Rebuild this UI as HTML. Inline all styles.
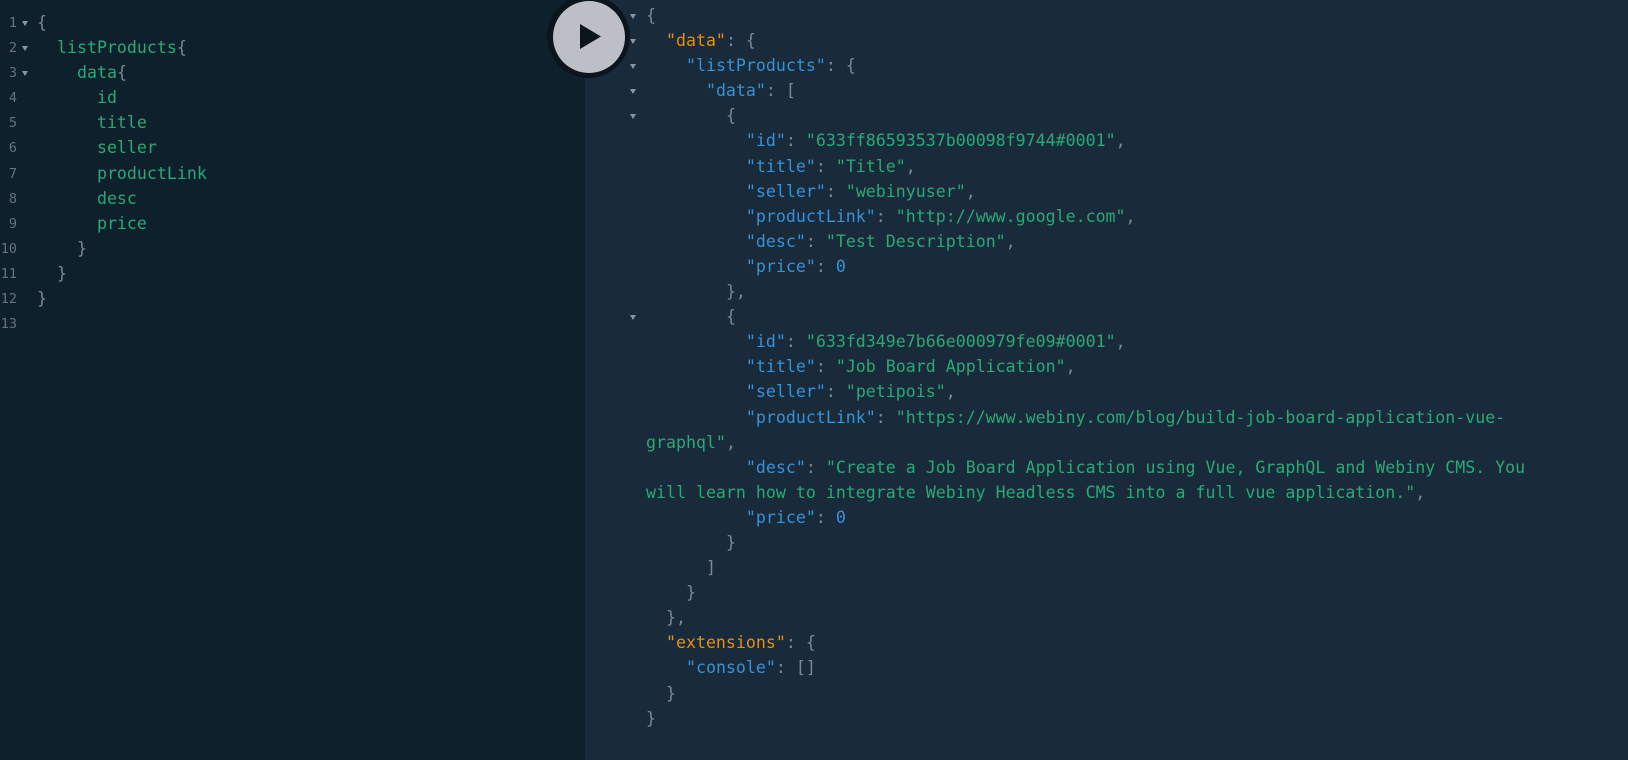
<!DOCTYPE html>
<html><head><meta charset="utf-8"><style>
html,body{margin:0;padding:0;width:1628px;height:760px;overflow:hidden;background:#192b3b;}
.l{position:absolute;left:0;top:0;width:585px;height:760px;background:#0f202d;}
.code{position:absolute;font-family:"DejaVu Sans Mono","Liberation Mono",monospace;font-size:16.6px;line-height:25.1px;white-space:pre;color:#8a949c;}
.g{color:#2aa876}.b{color:#3592d6}.o{color:#e58e10}.p{color:#7d8891}
.num{position:absolute;left:0;width:17px;text-align:right;font-family:"DejaVu Sans Mono",monospace;font-size:13.5px;line-height:25.1px;color:#66727c;}
.arr{position:absolute;width:0;height:0;border-left:3.5px solid transparent;border-right:3.5px solid transparent;border-top:5px solid #8c959c;}
.btn{position:absolute;left:547px;top:-5px;width:83px;height:83px;border-radius:50%;background:#0c151e;}
.btn i{position:absolute;left:5.5px;top:5.5px;width:72px;height:72px;border-radius:50%;background:#bcc0c6;}
</style></head><body>
<div class="l"></div>
<div class="num" style="top:11px">1<br>2<br>3<br>4<br>5<br>6<br>7<br>8<br>9<br>10<br>11<br>12<br>13</div>
<div class="arr" style="left:22px;top:21px"></div>
<div class="arr" style="left:22px;top:46px"></div>
<div class="arr" style="left:22px;top:71px"></div>
<div class="code" style="left:37px;top:10px"><span class="p">{</span>
  <span class="g">listProducts</span><span class="p">{</span>
    <span class="g">data</span><span class="p">{</span>
      <span class="g">id</span>
      <span class="g">title</span>
      <span class="g">seller</span>
      <span class="g">productLink</span>
      <span class="g">desc</span>
      <span class="g">price</span>
    <span class="p">}</span>
  <span class="p">}</span>
<span class="p">}</span></div>

<div class="btn"><i></i><svg style="position:absolute;left:31px;top:28px" width="24" height="27" viewBox="0 0 24 27"><path d="M2 1 L23 13.5 L2 26 Z" fill="#0c151e"/></svg></div>

<div class="arr" style="left:630px;top:14px"></div>
<div class="arr" style="left:630px;top:39px"></div>
<div class="arr" style="left:630px;top:64px"></div>
<div class="arr" style="left:630px;top:89px"></div>
<div class="arr" style="left:630px;top:114px"></div>
<div class="arr" style="left:630px;top:315px"></div>
<div class="code" style="left:646px;top:3px"><span class="p">{</span>
  <span class="o">"data"</span><span class="p">: {</span>
    <span class="b">"listProducts"</span><span class="p">: {</span>
      <span class="b">"data"</span><span class="p">: [</span>
        <span class="p">{</span>
          <span class="b">"id"</span><span class="p">: </span><span class="g">"633ff86593537b00098f9744#0001"</span><span class="p">,</span>
          <span class="b">"title"</span><span class="p">: </span><span class="g">"Title"</span><span class="p">,</span>
          <span class="b">"seller"</span><span class="p">: </span><span class="g">"webinyuser"</span><span class="p">,</span>
          <span class="b">"productLink"</span><span class="p">: </span><span class="g">"http://www.google.com"</span><span class="p">,</span>
          <span class="b">"desc"</span><span class="p">: </span><span class="g">"Test Description"</span><span class="p">,</span>
          <span class="b">"price"</span><span class="p">: </span><span class="b">0</span>
        <span class="p">},</span>
        <span class="p">{</span>
          <span class="b">"id"</span><span class="p">: </span><span class="g">"633fd349e7b66e000979fe09#0001"</span><span class="p">,</span>
          <span class="b">"title"</span><span class="p">: </span><span class="g">"Job Board Application"</span><span class="p">,</span>
          <span class="b">"seller"</span><span class="p">: </span><span class="g">"petipois"</span><span class="p">,</span>
          <span class="b">"productLink"</span><span class="p">: </span><span class="g">"https://www.webiny.com/blog/build-job-board-application-vue-</span>
<span class="g">graphql"</span><span class="p">,</span>
          <span class="b">"desc"</span><span class="p">: </span><span class="g">"Create a Job Board Application using Vue, GraphQL and Webiny CMS. You</span>
<span class="g">will learn how to integrate Webiny Headless CMS into a full vue application."</span><span class="p">,</span>
          <span class="b">"price"</span><span class="p">: </span><span class="b">0</span>
        <span class="p">}</span>
      <span class="p">]</span>
    <span class="p">}</span>
  <span class="p">},</span>
  <span class="o">"extensions"</span><span class="p">: {</span>
    <span class="b">"console"</span><span class="p">: []</span>
  <span class="p">}</span>
<span class="p">}</span></div>
</body></html>
